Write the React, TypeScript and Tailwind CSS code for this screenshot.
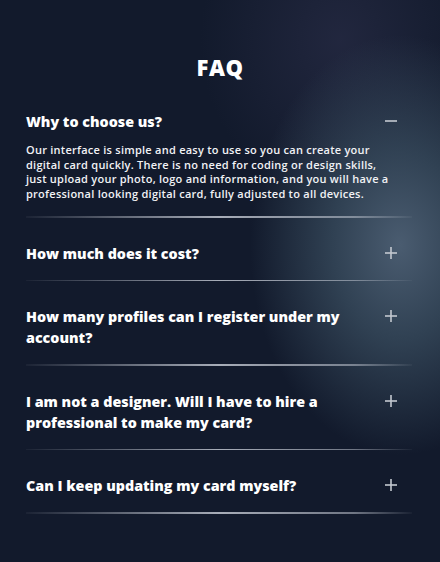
import React, { useState } from 'react';

interface FaqItem {
  question: string;
  answer: string;
}

const faqs: FaqItem[] = [
  {
    question: 'Why to choose us?',
    answer:
      'Our interface is simple and easy to use so you can create your digital card quickly. There is no need for coding or design skills, just upload your photo, logo and information, and you will have a professional looking digital card, fully adjusted to all devices.',
  },
  { question: 'How much does it cost?', answer: '' },
  { question: 'How many profiles can I register under my account?', answer: '' },
  { question: 'I am not a designer. Will I have to hire a professional to make my card?', answer: '' },
  { question: 'Can I keep updating my card myself?', answer: '' },
];

const ToggleIcon = ({ open }: { open: boolean }) => (
  <svg width="14" height="14" viewBox="0 0 14 14" className="shrink-0 mt-[3px]">
    <line x1="1" y1="7" x2="13" y2="7" stroke="#c3c8d0" strokeWidth="1.6" />
    {!open && <line x1="7" y1="1" x2="7" y2="13" stroke="#c3c8d0" strokeWidth="1.6" />}
  </svg>
);

const Divider = () => (
  <div className="h-[1.5px] w-full bg-[linear-gradient(90deg,rgba(255,255,255,0.04)_0%,rgba(205,210,220,0.8)_50%,rgba(205,210,220,0.5)_85%,rgba(255,255,255,0.03)_100%)]" />
);

const App: React.FC = () => {
  const [openIndex, setOpenIndex] = useState<number>(0);

  return (
    <div
      className="min-h-[562px] w-full bg-[#121a2c] bg-[radial-gradient(ellipse_150px_210px_at_400px_245px,rgba(74,92,112,1)_0%,rgba(58,78,96,0.75)_45%,rgba(18,26,44,0)_100%),radial-gradient(ellipse_140px_160px_at_340px_40px,rgba(40,44,70,0.7)_0%,rgba(18,26,44,0)_100%)] text-white pt-[54px] px-[26px] pb-[40px]"
      style={{ fontFamily: '"Open Sans", "Liberation Sans", sans-serif' }}
    >
      <h1 className="text-center text-[22px] font-extrabold leading-[26px] tracking-[0.5px]">FAQ</h1>

      <div className="mt-[31px] w-[386px]">
        {faqs.map((item, i) => {
          const open = openIndex === i;
          return (
            <div key={i}>
              <button
                onClick={() => setOpenIndex(open ? -1 : i)}
                className={`flex w-full items-start text-left ${i === 0 ? 'pt-0' : 'pt-[25px]'} ${open ? 'pb-[11px]' : 'pb-[16px]'}`}
              >
                <span className="flex-1 pr-[20px] text-[14.3px] font-extrabold leading-[21px]">
                  {item.question}
                </span>
                <span className="mr-[14px]">
                  <ToggleIcon open={open} />
                </span>
              </button>
              {open && (
                <p className="pb-[15px] pr-[20px] text-[11px] font-semibold leading-[14.6px] tracking-[0.25px] text-[#f1f2f5]">
                  {item.answer}
                </p>
              )}
              <Divider />
            </div>
          );
        })}
      </div>
    </div>
  );
};

export default App;
